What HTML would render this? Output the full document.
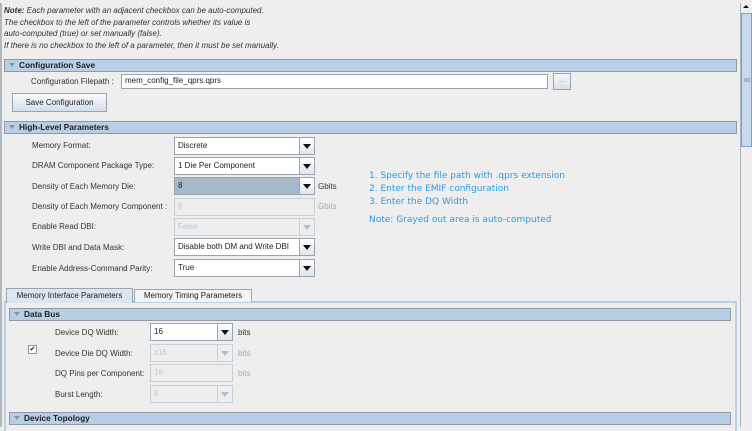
<!DOCTYPE html>
<html><head><style>
*{box-sizing:border-box;margin:0;padding:0}
body{width:752px;height:427px;background:#eeeeee;font-family:"Liberation Sans",sans-serif;font-size:8px;color:#222;position:relative;overflow:hidden}
.a{position:absolute;white-space:nowrap}
.hdr{position:absolute;height:13px;background:#b8cfe5;border:1px solid #8e9aa6;font-weight:bold;font-size:8.3px;line-height:11px;padding-left:14px}
.hdr:before{content:"";position:absolute;left:4px;top:3px;border-left:3px solid transparent;border-right:3px solid transparent;border-top:4px solid #8894a0}
.cb{position:absolute;height:18px;background:#fff;border:1px solid #9aa4ae;font-size:8px;line-height:16px;padding-left:3px}
.cb .ar{position:absolute;right:0;top:0;width:15px;height:16px;border-left:1px solid #9aa4ae;background:linear-gradient(#fff,#dde6ef)}
.cb .ar:after{content:"";position:absolute;left:3px;top:6px;border-left:4px solid transparent;border-right:4px solid transparent;border-top:5px solid #111}
.dis{background:#eeeeee;color:#b8c8d8;border-color:#c8d0d8}
.dis .ar{background:#eeeeee;border-color:#c8d0d8}
.dis .ar:after{border-top-color:#a8c0d8}
.lbl{position:absolute;font-size:8px;white-space:nowrap;color:#333}
.g{color:#aaa}
.blue{position:absolute;color:#2c9ae0;font-family:"DejaVu Sans",sans-serif;font-size:9px;white-space:nowrap}
</style></head><body>
<div class="a" style="left:0;top:3px;width:2px;height:424px;background:#b0b8c0"></div>
<div class="a" style="left:4px;top:5px;font-style:italic;font-size:8px;line-height:11.5px;color:#333">
<b>Note:</b> Each parameter with an adjacent checkbox can be auto-computed.<br>The checkbox to the left of the parameter controls whether its value is<br>auto-computed (true) or set manually (false).<br>If there is no checkbox to the left of a parameter, then it must be set manually.</div>

<div class="hdr" style="left:4px;top:59px;width:733px">Configuration Save</div>
<div class="lbl" style="left:31px;top:77px">Configuration Filepath :</div>
<div class="cb" style="left:121px;top:74px;width:427px;height:15px;line-height:12px">mem_config_file_qprs.qprs</div>
<div class="a" style="left:553px;top:73px;width:18px;height:17px;border:1px solid #9aa4ae;background:linear-gradient(#f6f8fa,#d8e2ec);font-size:7px;color:#889;text-align:center;line-height:14px">...</div>
<div class="a" style="left:12px;top:93px;width:95px;height:19px;border:1px solid #9aa4ae;background:linear-gradient(#f8fafc,#d4dfea);text-align:center;line-height:17px">Save Configuration</div>

<div class="hdr" style="left:4px;top:121px;width:733px">High-Level Parameters</div>

<div class="lbl" style="left:32px;top:141px">Memory Format:</div>
<div class="cb" style="left:174px;top:137px;width:141px">Discrete<div class="ar"></div></div>
<div class="lbl" style="left:32px;top:161px">DRAM Component Package Type:</div>
<div class="cb" style="left:174px;top:157px;width:141px">1 Die Per Component<div class="ar"></div></div>
<div class="lbl" style="left:32px;top:182px">Density of Each Memory Die:</div>
<div class="cb" style="left:174px;top:177px;width:141px;background:#a7b8cb">8<div class="ar"></div></div>
<div class="lbl" style="left:318px;top:182px">Gbits</div>
<div class="lbl" style="left:32px;top:202px">Density of Each Memory Component :</div>
<div class="cb dis" style="left:174px;top:198px;width:141px">8</div>
<div class="lbl g" style="left:318px;top:202px">Gbits</div>
<div class="lbl" style="left:32px;top:222px">Enable Read DBI:</div>
<div class="cb dis" style="left:174px;top:218px;width:141px">False<div class="ar"></div></div>
<div class="lbl" style="left:32px;top:243px">Write DBI and Data Mask:</div>
<div class="cb" style="left:174px;top:238px;width:141px">Disable both DM and Write DBI<div class="ar"></div></div>
<div class="lbl" style="left:32px;top:264px">Enable Address-Command Parity:</div>
<div class="cb" style="left:174px;top:259px;width:141px">True<div class="ar"></div></div>

<div class="blue" style="left:369px;top:171px">1. Specify the file path with .qprs extension</div>
<div class="blue" style="left:369px;top:184px">2. Enter the EMIF configuration</div>
<div class="blue" style="left:369px;top:197px">3. Enter the DQ Width</div>
<div class="blue" style="left:369px;top:215px">Note: Grayed out area is auto-computed</div>

<div class="a" style="left:4px;top:301px;width:733px;height:130px;border:2px solid #b8cfe5;border-bottom:none"></div>
<div class="a" style="left:6px;top:288px;width:127px;height:15px;background:#dbe6f1;border:1px solid #9aa4ae;border-bottom:none;text-align:center;line-height:14px">Memory Interface Parameters</div>
<div class="a" style="left:134px;top:289px;width:118px;height:13px;background:#f4f4f4;border:1px solid #9aa4ae;border-bottom:none;text-align:center;line-height:12px">Memory Timing Parameters</div>

<div class="hdr" style="left:9px;top:308px;width:722px">Data Bus</div>
<div class="lbl" style="left:55px;top:328px">Device DQ Width:</div>
<div class="cb" style="left:150px;top:323px;width:83px;background:#fff">16<div class="ar"></div></div>
<div class="lbl" style="left:238px;top:328px">bits</div>
<div class="a" style="left:28px;top:345px;width:9px;height:9px;border:1px solid #8899aa;background:#fff;font-size:7px;line-height:7px;text-align:center">✔</div>
<div class="lbl" style="left:55px;top:349px">Device Die DQ Width:</div>
<div class="cb dis" style="left:150px;top:344px;width:83px">x16<div class="ar"></div></div>
<div class="lbl g" style="left:238px;top:349px">bits</div>
<div class="lbl" style="left:55px;top:369px">DQ Pins per Component:</div>
<div class="cb dis" style="left:150px;top:364px;width:83px">16</div>
<div class="lbl g" style="left:238px;top:369px">bits</div>
<div class="lbl" style="left:55px;top:390px">Burst Length:</div>
<div class="cb dis" style="left:150px;top:385px;width:83px">8<div class="ar"></div></div>

<div class="hdr" style="left:9px;top:412px;width:722px">Device Topology</div>

<div class="a" style="left:740px;top:3px;width:12px;height:424px;background:#eeeeee;border-left:1px solid #a8b4c0"></div>
<div class="a" style="left:743px;top:5px;border-left:3px solid transparent;border-right:3px solid transparent;border-bottom:3px solid #111"></div>
<div class="a" style="left:741px;top:13px;width:11px;height:134px;background:#c8daec;border:1px solid #7f9fd0"></div>
<div class="a" style="left:744px;top:78px;width:6px;height:4px;background:#a0b8d8"></div>
</body></html>
